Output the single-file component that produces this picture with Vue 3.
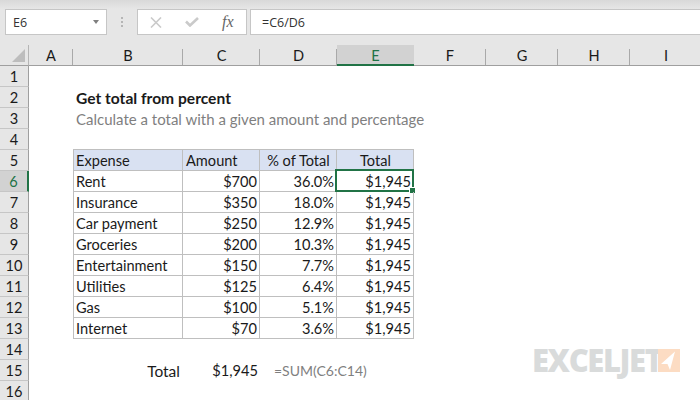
<script setup>
const columns = ['A', 'B', 'C', 'D', 'E', 'F', 'G', 'H', 'I']
const rowNumbers = Array.from({ length: 16 }, (_, i) => i + 1)

const expenses = [
  ['Rent', '$700', '36.0%'],
  ['Insurance', '$350', '18.0%'],
  ['Car payment', '$250', '12.9%'],
  ['Groceries', '$200', '10.3%'],
  ['Entertainment', '$150', '7.7%'],
  ['Utilities', '$125', '6.4%'],
  ['Gas', '$100', '5.1%'],
  ['Internet', '$70', '3.6%'],
]

const cells = {
  2: { B: 'Get total from percent' },
  3: { B: 'Calculate a total with a given amount and percentage' },
  5: { B: 'Expense', C: 'Amount', D: '% of Total', E: 'Total' },
  15: { B: 'Total', C: '$1,945', D: '=SUM(C6:C14)' },
}
expenses.forEach((item, i) => {
  cells[i + 6] = { B: item[0], C: item[1], D: item[2], E: '$1,945' }
})

function cellClass(row, col) {
  const inTable = row >= 5 && row <= 13 && 'BCDE'.includes(col)
  return {
    table: inTable,
    head: inTable && row === 5,
    'first-col': inTable && col === 'B',
    right: (row > 5 && row <= 13 && 'CDE'.includes(col)) || (row === 15 && col !== 'D'),
    center: row === 5 && 'DE'.includes(col),
    title: row === 2,
    subtitle: row === 3,
    'total-label': row === 15 && col === 'B',
    formula: row === 15 && col === 'D',
  }
}
</script>

<template>
  <div class="app">
    <div class="top-strip"></div>

    <div class="formula-bar">
      <div class="name-box">
        <span>E6</span>
        <i class="arrow"></i>
      </div>
      <div class="grip"><b></b><b></b><b></b></div>
      <div class="buttons">
        <svg width="12" height="11" viewBox="0 0 12 11">
          <path d="M1 .5 L11 10.5 M11 .5 L1 10.5" stroke="#cacaca" stroke-width="1.6" fill="none" />
        </svg>
        <svg width="14" height="10" viewBox="0 0 14 10">
          <path d="M1 4.5 L5 8.5 L13 1" stroke="#cacaca" stroke-width="2.6" fill="none" />
        </svg>
        <span class="fx">fx</span>
      </div>
      <div class="formula-input">=C6/D6</div>
    </div>

    <div class="sheet">
      <div class="corner"><i></i></div>
      <div
        v-for="col in columns"
        :key="col"
        class="col-head"
        :class="{ selected: col === 'E' }"
      >
        {{ col }}
      </div>

      <template v-for="row in rowNumbers" :key="row">
        <div class="row-head" :class="{ selected: row === 6 }">{{ row }}</div>
        <div
          v-for="col in columns"
          :key="col"
          class="cell"
          :class="cellClass(row, col)"
        >
          {{ cells[row] && cells[row][col] }}
          <span v-if="row === 6 && col === 'E'" class="active-cell"><i></i></span>
        </div>
      </template>
    </div>

    <div class="logo">
      <span>EXCELJET</span>
      <svg width="22" height="23" viewBox="0 0 22 23">
        <rect width="22" height="23" fill="#fcdcc3" />
        <path d="M17 2.5 L3 15 L9.5 15 L12 21 Z" fill="#fff" />
      </svg>
    </div>
  </div>
</template>

<style scoped>
.app {
  position: relative;
  width: 700px;
  height: 400px;
  overflow: hidden;
  background: #fff;
  color: #1a1a1a;
  font-family: Lato, "Liberation Sans", sans-serif;
  font-size: 14.6px;
}

.top-strip {
  height: 9px;
  background: linear-gradient(#d9d9d9, #e6e6e6);
}

.formula-bar {
  display: flex;
  height: 36px;
  padding-left: 5px;
  box-sizing: border-box;
  background: #e6e6e6;
}

.name-box,
.buttons,
.formula-input {
  height: 26px;
  box-sizing: border-box;
  border: 1px solid #c6c6c6;
  background: #fff;
  display: flex;
  align-items: center;
}

.name-box {
  width: 102px;
  padding: 0 7px;
  justify-content: space-between;
  font-family: "Open Sans", sans-serif;
  font-size: 12.5px;
  color: #333;
}

.arrow {
  border-left: 3.5px solid transparent;
  border-right: 3.5px solid transparent;
  border-top: 4px solid #7f7f7f;
}

.grip {
  width: 30px;
  height: 26px;
  display: flex;
  flex-direction: column;
  align-items: center;
  justify-content: center;
  gap: 2px;
}

.grip b {
  width: 2px;
  height: 2px;
  background: #b5b5b5;
}

.buttons {
  width: 110px;
  padding-left: 12px;
  gap: 23px;
}

.fx {
  font-family: "Liberation Serif", serif;
  font-style: italic;
  font-size: 16px;
  color: #666;
}

.formula-input {
  flex: 1;
  margin-left: 3px;
  padding-left: 11px;
  border-right: none;
  font-family: "Open Sans", sans-serif;
  font-size: 12.5px;
  color: #333;
}

.sheet {
  display: grid;
  grid-template-columns: 29px 44px 110px 77px 77px 77px 72px 72px 72px 72px;
  grid-auto-rows: 21px;
}

.corner {
  position: relative;
  background: #e6e6e6;
  border-right: 1px solid #b5b5b5;
  border-bottom: 1px solid #9f9f9f;
  box-sizing: border-box;
}

.corner i {
  position: absolute;
  right: 3px;
  bottom: 3px;
  border-left: 13px solid transparent;
  border-bottom: 13px solid #bdbdbd;
}

.col-head {
  background: #e6e6e6;
  border-bottom: 1px solid #9f9f9f;
  box-sizing: border-box;
  display: flex;
  align-items: center;
  justify-content: center;
  padding-top: 1px;
  background-image: linear-gradient(#a9a9a9, #a9a9a9);
  background-size: 1px 16px;
  background-position: right bottom;
  background-repeat: no-repeat;
}

.col-head.selected {
  background: #d2d2d2;
  border-bottom: 2px solid #217346;
  color: #217346;
}

.row-head {
  background: #e6e6e6;
  border-right: 1px solid #9f9f9f;
  border-bottom: 1px solid #c6c6c6;
  box-sizing: border-box;
  display: flex;
  align-items: center;
  justify-content: center;
  padding-top: 1px;
}

.row-head.selected {
  background: #d2d2d2;
  border-right: 2px solid #217346;
  color: #217346;
}

.cell {
  position: relative;
  box-sizing: border-box;
  padding: 0 2px 0 3px;
  line-height: 22px;
  white-space: nowrap;
}

.cell.table {
  border-right: 1px solid #bfbfbf;
  border-bottom: 1px solid #bfbfbf;
  line-height: 21px;
}

.cell.first-col {
  border-left: 1px solid #bfbfbf;
  padding-left: 2px;
}

.cell.head {
  background: #d9e1f2;
  box-shadow: 0 -1px 0 #bfbfbf;
}

.right {
  text-align: right;
}

.center {
  text-align: center;
}

.title {
  font-weight: bold;
  font-size: 15.6px;
}

.subtitle {
  color: #7f7f7f;
  font-size: 15px;
}

.total-label {
  font-size: 15.5px;
  padding-right: 3px;
}

.formula {
  color: #7f7f7f;
  font-size: 14px;
  padding-left: 14px;
}

.active-cell {
  position: absolute;
  left: -2px;
  top: -2px;
  right: -1px;
  bottom: -1px;
  border: 2px solid #217346;
  pointer-events: none;
}

.active-cell i {
  position: absolute;
  right: -4px;
  bottom: -4px;
  width: 5px;
  height: 5px;
  background: #217346;
  border: 1px solid #fff;
}

.logo {
  position: absolute;
  left: 532px;
  top: 349px;
  display: flex;
  align-items: flex-start;
  gap: 3px;
}

.logo span {
  width: 123px;
  font-family: "Open Sans", sans-serif;
  font-weight: 800;
  font-size: 31px;
  line-height: 23px;
  letter-spacing: -1.4px;
  color: #d9dbdb;
  white-space: nowrap;
}
</style>
